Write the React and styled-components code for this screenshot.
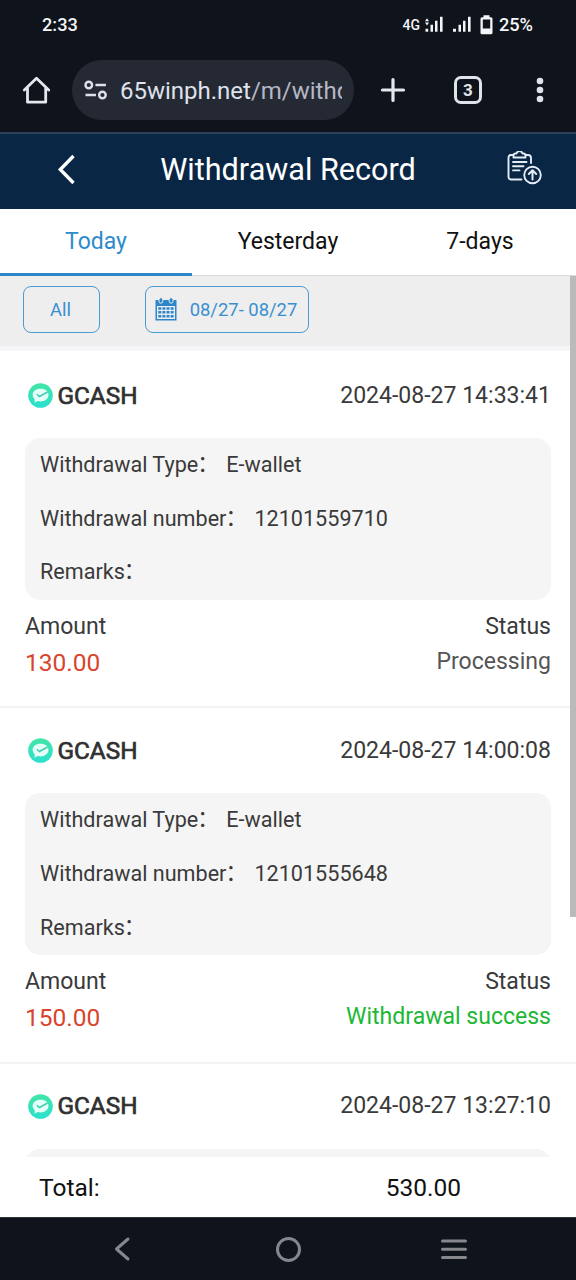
import React from 'react'
import styled, { createGlobalStyle } from 'styled-components'

const GlobalStyle = createGlobalStyle`
  * {
    box-sizing: border-box;
  }
  body {
    margin: 0;
    font-family: Roboto, "Noto Sans CJK SC", sans-serif;
  }
`
const Screen = styled.div`
  width: 576px;
  height: 1280px;
  display: flex;
  flex-direction: column;
  overflow: hidden;
  background: #fff;
`
const StatusBar = styled.div`
  flex: none;
  height: 50px;
  padding: 0 43px 0 42px;
  display: flex;
  align-items: center;
  background: #0f131b;
  color: #f4f5f8;
  font-size: 18.2px;
  font-weight: 500;
`
const Clock = styled.span`
  margin-right: auto;
  margin-top: -1px;
`
const Network = styled.span`
  font-size: 14px;
  margin-right: 5px;
`
const Battery = styled.span`
  margin-left: 6px;
  margin-top: -1px;
`
const Toolbar = styled.div`
  flex: none;
  height: 84px;
  padding: 10px 26px 12px 22px;
  display: flex;
  align-items: center;
  background: #0f131b;
  border-bottom: 2px solid #2c3f5b;
`
const UrlBar = styled.div`
  width: 282px;
  height: 60px;
  margin: 0 25px 0 21px;
  padding: 0 12px;
  border-radius: 30px;
  display: flex;
  align-items: center;
  background: #252934;
`
const Url = styled.div`
  width: 223px;
  margin-left: 12px;
  margin-top: 2px;
  overflow: hidden;
  white-space: nowrap;
  font-size: 24px;
  line-height: 32px;
  color: #dfe2ec;
`
const UrlPath = styled.span`
  color: #b4b8c4;
`
const TabCount = styled.div`
  flex: none;
  width: 28px;
  height: 28px;
  margin: 0 54px 0 47px;
  border: 3px solid #e1e3ea;
  border-radius: 7px;
  display: flex;
  align-items: center;
  justify-content: center;
  color: #e1e3ea;
  font-size: 17px;
  font-weight: 700;
`
const AppBar = styled.header`
  flex: none;
  height: 75px;
  padding: 0 33px 5px 56px;
  display: flex;
  align-items: center;
  background: #0a2645;
`
const Title = styled.h1`
  flex: 1;
  margin: 0;
  padding-right: 8px;
  text-align: center;
  color: #fff;
  font-size: 30.6px;
  font-weight: 400;
`
const Tabs = styled.nav`
  flex: none;
  height: 67px;
  display: flex;
`
const Tab = styled.div`
  flex: 1;
  padding-top: 17px;
  text-align: center;
  font-size: 23px;
  line-height: 32px;
  color: ${(props) => (props.$active ? '#2d8bcd' : '#111')};
  border-bottom: ${(props) => (props.$active ? '3px solid #2f86c8' : '1px solid #dcdcdc')};
`
const Content = styled.main`
  position: relative;
  flex: 1;
  min-height: 0;
  display: flex;
  flex-direction: column;
`
const Scrollbar = styled.div`
  position: absolute;
  top: 0;
  right: 0;
  width: 6px;
  height: 641px;
  background: #bababa;
`
const Filters = styled.div`
  flex: none;
  height: 75px;
  padding: 10px 23px 0;
  display: flex;
  gap: 45px;
  background: #eee;
  border-bottom: 5px solid #f6f6f8;
`
const FilterButton = styled.div`
  width: ${(props) => props.$width}px;
  height: 47px;
  padding: 0 2px 1px 0;
  border: 1px solid #4a9bd3;
  border-radius: 8px;
  display: flex;
  align-items: center;
  justify-content: center;
  gap: 13px;
  color: #3990cf;
  font-size: 18.43px;
`
const List = styled.div`
  flex: 1;
  min-height: 0;
  padding-top: 2px;
  overflow: hidden;
`
const Record = styled.section`
  height: 355.4px;
  padding: 25px 25px 0;
  border-bottom: 2px solid #f4f4f4;
  color: #3a3a3a;
`
const RecordHead = styled.div`
  height: 34px;
  display: flex;
  align-items: center;
  justify-content: space-between;
  font-size: 23.04px;
`
const Wallet = styled.div`
  display: flex;
  align-items: center;
  gap: 4.5px;
  padding-left: 3px;
  font-size: 24.3px;
  color: #303030;
`
const WalletName = styled.span`
  -webkit-text-stroke: 0.7px #303030;
`
const Details = styled.div`
  height: 161.5px;
  margin-top: 26px;
  padding: 0 15px;
  border-radius: 15px;
  background: #f5f5f5;
`
const DetailRow = styled.div`
  display: flex;
  height: 53.6px;
  line-height: 53.6px;
  font-size: 21.6px;
`
const Colon = styled.span`
  width: 28px;
  transform: translate(-1px, -1px);
`
const Summary = styled.div`
  display: flex;
  justify-content: space-between;
  margin-top: 9px;
  font-size: 23.04px;
  line-height: 36px;
`
const SummaryColumn = styled.div`
  text-align: ${(props) => props.$align || 'left'};
`
const Amount = styled.div`
  font-size: 24.5px;
  color: #d8452c;
`
const Status = styled.div`
  line-height: 33px;
  color: ${(props) => (props.$success ? '#1cb835' : '#555')};
`
const TotalBar = styled.div`
  flex: none;
  height: 60px;
  padding: 0 115px 0 39px;
  display: flex;
  align-items: center;
  justify-content: space-between;
  background: #fff;
  color: #111;
  font-size: 24.5px;
`
const NavBar = styled.div`
  flex: none;
  height: 63px;
  padding: 0 108px 0 113px;
  border-top: 1px solid #30353a;
  display: flex;
  align-items: center;
  background: #0f131b;
`

const HomeIcon = () => (
  <svg width="29" height="30" viewBox="0 0 29 30" fill="none" stroke="#e6e7ec" strokeWidth="2.8" strokeLinejoin="round" strokeLinecap="round">
    <path d="M2.3 15 14.5 3.2 26.7 15M5.5 13V27.2H23.7V13" />
  </svg>
)

const SiteIcon = () => (
  <svg width="24" height="20" viewBox="0 0 24 20" fill="none" stroke="#dfe2ec" strokeWidth="2.4">
    <circle cx="4.8" cy="5" r="3.3" />
    <path d="M11.5 5H22M1.5 15H12" />
    <circle cx="18.5" cy="15" r="3.3" />
  </svg>
)

const PlusIcon = () => (
  <svg width="28" height="28" viewBox="0 0 28 28" stroke="#e6e7ec" strokeWidth="3.2" strokeLinecap="round">
    <path d="M14 3.5V24.5M3.5 14H24.5" />
  </svg>
)

const MoreIcon = () => (
  <svg width="8" height="28" viewBox="0 0 8 28" fill="#e1e3ea">
    <circle cx="4" cy="5" r="3.3" />
    <circle cx="4" cy="14" r="3.3" />
    <circle cx="4" cy="23" r="3.3" />
  </svg>
)

const SignalIcons = () => (
  <svg width="68" height="22" viewBox="0 -0.7 68 22" fill="#f4f5f8">
    <path d="M0 6.5 2 3.5 4 6.5ZM0 7.8 2 10.8 4 7.8ZM0.5 14H3.2V17H0.5ZM5.5 10H8V17H5.5ZM10 6H12.5V17H10ZM15 2H17.6V17H15Z" />
    <path d="M28 14H31V17H28ZM33.5 10H36V17H33.5ZM38 6H40.5V17H38ZM43 2H45.6V17H43Z" />
    <path fillRule="evenodd" d="M58.5 0.5H64.5V2.5H66Q67.5 2.5 67.5 4V18Q67.5 19.5 66 19.5H57Q55.5 19.5 55.5 18V4Q55.5 2.5 57 2.5H58.5ZM57.8 4.8V13.7H65.2V4.8Z" />
  </svg>
)

const BackIcon = () => (
  <svg width="21" height="32" viewBox="0 0 21 32" fill="none" stroke="#fff" strokeWidth="3.4">
    <path d="M17.5 3 4.3 16.5 17.5 30" />
  </svg>
)

const RecordIcon = () => (
  <svg width="36" height="36" viewBox="0.5 2 36 36" fill="none" stroke="#e4ecf5" strokeWidth="1.9" strokeLinecap="round" strokeLinejoin="round">
    <path d="M7 6H4.5Q2 6 2 8.5V28Q2 30.5 4.5 30.5H15M19 6H21.5Q24.5 6 24.5 9V14" />
    <path d="M7 8.5V6.2Q7 4.5 9 4.5H10Q11 2 13 2T16 4.5H17Q19 4.5 19 6.2V8.5Z" />
    <path d="M6.5 13H20M6.5 17.2H17M6.5 21.4H13" />
    <circle cx="26" cy="26" r="8.3" />
    <path d="M26 30.5V21.5M22.3 25 26 21.3 29.7 25" strokeWidth="2" />
  </svg>
)

const CalendarIcon = () => (
  <svg width="22" height="25" viewBox="0 0 22 25" fill="#2d86ca">
    <path fillRule="evenodd" d="M1 3H21Q21.5 3 21.5 4V23.5H.5V4Q.5 3 1 3ZM2 9V22H20V9Z" />
    <g stroke="#eee" strokeWidth="1">
      <rect x="4" y=".7" width="3.8" height="5.5" rx="1.9" />
      <rect x="14.2" y=".7" width="3.8" height="5.5" rx="1.9" />
    </g>
    <path d="M3.3 10.3h3v2.4h-3zM7.4 10.3h3v2.4h-3zM11.5 10.3h3v2.4h-3zM15.6 10.3h3v2.4h-3zM3.3 14.1h3v2.4h-3zM7.4 14.1h3v2.4h-3zM11.5 14.1h3v2.4h-3zM15.6 14.1h3v2.4h-3zM3.3 18h3v2.4h-3zM7.4 18h3v2.4h-3zM11.5 18h3v2.4h-3zM15.6 18h3v2.4h-3z" />
  </svg>
)

const WalletIcon = () => (
  <svg width="25" height="26" viewBox="0 -0.5 25 26">
    <defs>
      <linearGradient id="wallet" x1="0" y1="0" x2="0" y2="1">
        <stop offset="0" stopColor="#43e5a6" />
        <stop offset="1" stopColor="#2be0cf" />
      </linearGradient>
    </defs>
    <circle cx="12.5" cy="13" r="12.3" fill="url(#wallet)" />
    <path d="M12.6 6.3C17.5 6.3 20.5 9 20.5 12.5S17 19 12.6 19Q11 19 9.7 18.6L6.5 20.3 6.8 17.1Q4.6 15.3 4.6 12.6C4.6 9 7.8 6.3 12.6 6.3Z" fill="#e4fff7" />
    <path d="M8.8 11.8 11.4 14 19.6 9.5" fill="none" stroke="#3fcdb1" strokeWidth="1.5" />
  </svg>
)

const NavBackIcon = () => (
  <svg width="18" height="26" viewBox="0 0 18 26" fill="none" stroke="#85878c" strokeWidth="3" strokeLinecap="round" strokeLinejoin="round">
    <path d="M15 3 3.5 13 15 23" />
  </svg>
)

const NavHomeIcon = styled.span`
  width: 25px;
  height: 25px;
  margin: 0 139px 0 145px;
  border: 3px solid #85878c;
  border-radius: 50%;
`

const NavMenuIcon = () => (
  <svg width="28" height="26" viewBox="0 0 28 26" stroke="#85878c" strokeWidth="3" strokeLinecap="round">
    <path d="M2.5 5H25.5M2.5 13.3H25.5M2.5 21.6H25.5" />
  </svg>
)

const records = [
  { time: '2024-08-27 14:33:41', number: '12101559710', amount: '130.00', status: 'Processing' },
  { time: '2024-08-27 14:00:08', number: '12101555648', amount: '150.00', status: 'Withdrawal success', success: true },
  { time: '2024-08-27 13:27:10' },
]

const Detail = ({ label, value }) => (
  <DetailRow>
    <span>{label}</span>
    <Colon>：</Colon>
    <span>{value}</span>
  </DetailRow>
)

const WithdrawalRecord = ({ record }) => (
  <Record>
    <RecordHead>
      <Wallet><WalletIcon /><WalletName>GCASH</WalletName></Wallet>
      <span>{record.time}</span>
    </RecordHead>
    <Details>
      {record.number && (
        <>
          <Detail label="Withdrawal Type" value="E-wallet" />
          <Detail label="Withdrawal number" value={record.number} />
          <Detail label="Remarks" />
        </>
      )}
    </Details>
    {record.amount && (
      <Summary>
        <SummaryColumn>
          <div>Amount</div>
          <Amount>{record.amount}</Amount>
        </SummaryColumn>
        <SummaryColumn $align="right">
          <div>Status</div>
          <Status $success={record.success}>{record.status}</Status>
        </SummaryColumn>
      </Summary>
    )}
  </Record>
)

const App = () => {
  return (
    <Screen>
      <GlobalStyle />
      <StatusBar>
        <Clock>2:33</Clock>
        <Network>4G</Network>
        <SignalIcons />
        <Battery>25%</Battery>
      </StatusBar>
      <Toolbar>
        <HomeIcon />
        <UrlBar>
          <SiteIcon />
          <Url>65winph.net<UrlPath>/m/withd</UrlPath></Url>
        </UrlBar>
        <PlusIcon />
        <TabCount>3</TabCount>
        <MoreIcon />
      </Toolbar>
      <AppBar>
        <BackIcon />
        <Title>Withdrawal Record</Title>
        <RecordIcon />
      </AppBar>
      <Tabs>
        <Tab $active>Today</Tab>
        <Tab>Yesterday</Tab>
        <Tab>7-days</Tab>
      </Tabs>
      <Content>
        <Filters>
          <FilterButton $width={77}>All</FilterButton>
          <FilterButton $width={164}><CalendarIcon />08/27- 08/27</FilterButton>
        </Filters>
        <List>
          {records.map((record) => (
            <WithdrawalRecord key={record.time} record={record} />
          ))}
        </List>
        <Scrollbar />
      </Content>
      <TotalBar>
        <span>Total:</span>
        <span>530.00</span>
      </TotalBar>
      <NavBar>
        <NavBackIcon />
        <NavHomeIcon />
        <NavMenuIcon />
      </NavBar>
    </Screen>
  )
}

export default App
